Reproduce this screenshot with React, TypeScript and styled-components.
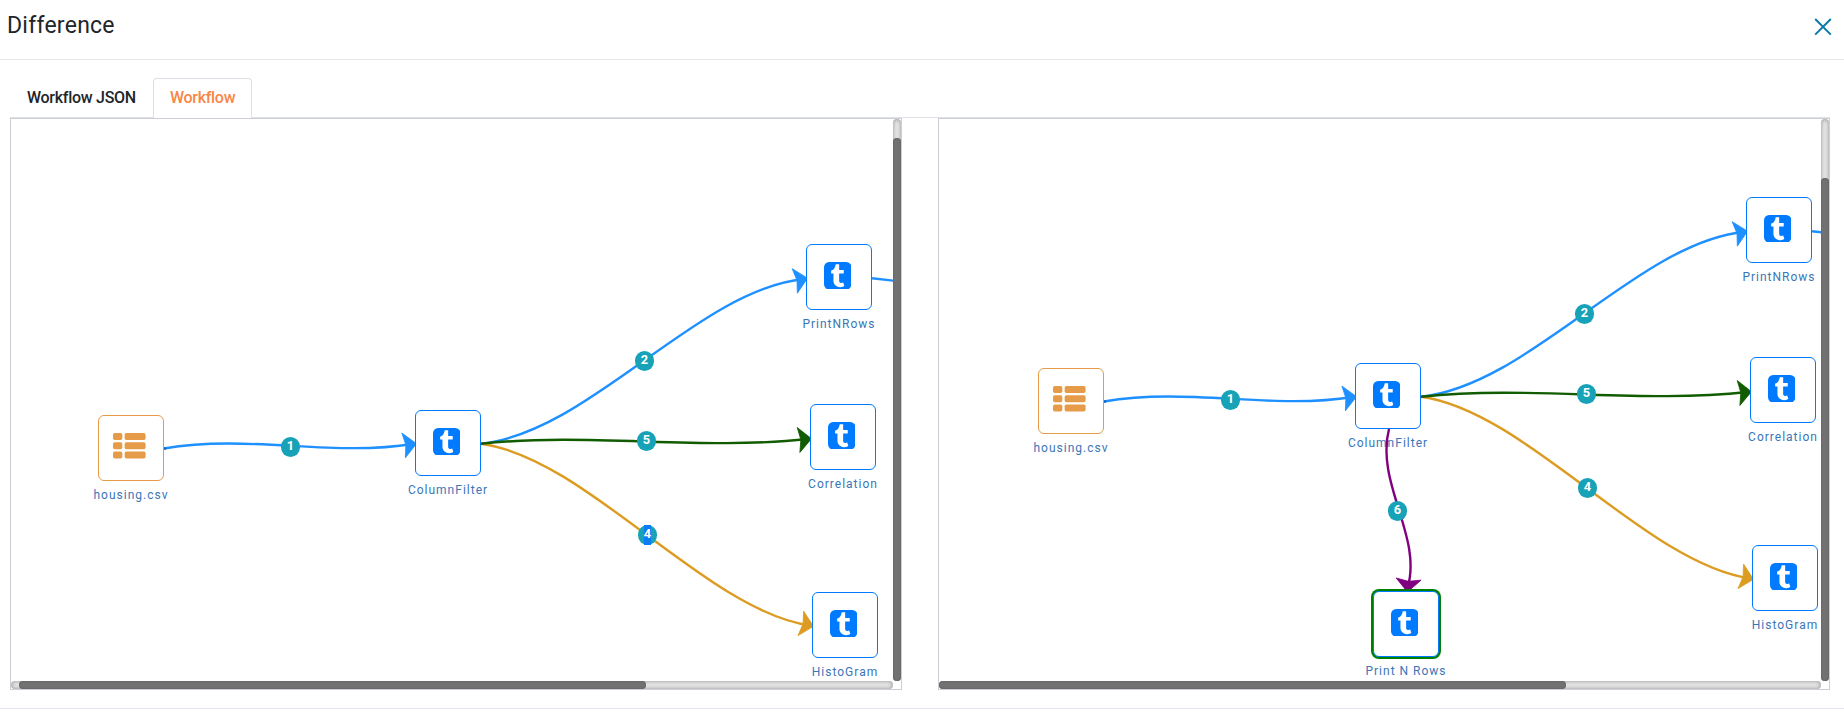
import React from 'react';
import styled, { createGlobalStyle } from 'styled-components';

const GlobalStyle = createGlobalStyle`
  * { box-sizing: border-box; }
  body {
    margin: 0;
    background: #fff;
    color: #212529;
    font-family: Roboto, 'Liberation Sans', sans-serif;
    overflow: hidden;
  }
`;

const Dialog = styled.div`
  display: flex;
  flex-direction: column;
  height: 722px;
`;

const Header = styled.header`
  display: flex;
  justify-content: space-between;
  align-items: flex-start;
  height: 60px;
  padding: 9px 12px 0 7px;
  border-bottom: 1px solid #e5e7ea;
`;

const Title = styled.h1`
  margin: 1px 0 0;
  font-size: 23px;
  line-height: 32px;
  font-weight: 400;
  letter-spacing: 0.25px;
`;

const CloseButton = styled.button`
  display: flex;
  margin: 9px 0 0;
  padding: 0;
  border: 0;
  background: none;
  color: #0a7ba8;
`;

const Body = styled.main`
  padding: 18px 14px 0 10px;
  height: 649px;
  border-bottom: 1px solid #e2e6ec;
`;

const Tabs = styled.nav`
  display: flex;
  height: 40px;
  border-bottom: 1px solid #dee2e6;
`;

const Tab = styled.button<{ $active?: boolean }>`
  height: 40px;
  padding: 0 16px 1px;
  border: 1px solid ${(p) => (p.$active ? '#dcdfe6' : 'transparent')};
  border-bottom: 0;
  border-radius: 4px 4px 0 0;
  background: ${(p) => (p.$active ? '#fff' : 'transparent')};
  color: ${(p) => (p.$active ? '#f98646' : '#212529')};
  font: 500 16px/24px Roboto, sans-serif;
  letter-spacing: -0.28px;
`;

const Panels = styled.div`
  display: flex;
  justify-content: space-between;
`;

const Panel = styled.section`
  display: grid;
  grid-template: 562px 8px / 882px 8px;
  border: 1px solid #cccfd6;
`;

const Track = styled.div<{ $vertical?: boolean; $lead: number }>`
  display: flex;
  flex-direction: ${(p) => (p.$vertical ? 'column' : 'row')};
  padding: ${(p) => (p.$vertical ? `${p.$lead}px 0 0` : `0 0 0 ${p.$lead}px`)};
  border-radius: 4px;
  background: #e6e6e6;
  box-shadow: inset 0 0 4px #8f8f8f;
`;

const Thumb = styled.div<{ $length: number }>`
  flex: 0 0 ${(p) => p.$length}px;
  border-radius: 4px;
  background: #727272;
  box-shadow: inset 0 0 2px #555;
`;

const Canvas = styled.div`
  position: relative;
  overflow: hidden;
`;

const Scene = styled.div<{ $x: number; $y: number }>`
  position: absolute;
  left: ${(p) => p.$x}px;
  top: ${(p) => p.$y}px;
`;

const Wires = styled.svg`
  position: absolute;
  left: 0;
  top: 0;
  overflow: visible;
`;

const NodeBox = styled.div<{ $x: number; $y: number; $color: string; $added?: boolean }>`
  position: absolute;
  left: ${(p) => p.$x}px;
  top: ${(p) => p.$y}px;
  width: 66px;
  height: 66px;
  display: flex;
  justify-content: center;
  padding: 17px 3px 0 0;
  border: 1px solid ${(p) => p.$color};
  border-radius: 6px;
  background: #fff;
  color: ${(p) => p.$color};
  box-shadow: ${(p) => (p.$added ? '0 0 0 2px #008000' : 'none')};
`;

const NodeLabel = styled.div<{ $x: number; $y: number }>`
  position: absolute;
  left: ${(p) => p.$x - 28}px;
  top: ${(p) => p.$y + 71}px;
  width: 122px;
  text-align: center;
  font-size: 12px;
  line-height: 18px;
  letter-spacing: 1px;
  white-space: nowrap;
  color: #3a76b8;
`;

const Badge = styled.div<{ $x: number; $y: number }>`
  position: absolute;
  left: ${(p) => p.$x - 9.5}px;
  top: ${(p) => p.$y - 10}px;
  display: flex;
  justify-content: center;
  width: 19px;
  height: 20px;
  border-radius: 10px;
  background: #17a2b8;
  color: #fff;
  font-size: 12.8px;
  line-height: 18px;
  font-weight: 700;
`;

const BadgeText = styled.span<{ $selected?: boolean }>`
  height: 20px;
  background: ${(p) => (p.$selected ? '#0a7cf5' : 'transparent')};
`;

const TumblrIcon = () => (
  <svg width="27.43" height="27.43" viewBox="128 128 1536 1536" fill="currentColor">
    <path d="M1264 1461l-62-183q-44 22-103 22-36-1-62-10.5t-38.5-31.5-17.5-40.5-5-43.5v-398h257v-194h-256v-326h-188q-8 0-9 10-5 44-17.5 87t-39 95-77 95-118.5 68v165h130v418q0 57 21.5 115t65 111 121 85.5 176.5 30.5q69-1 136.5-25t85.5-50zm400-1045v960q0 119-84.5 203.5t-203.5 84.5h-960q-119 0-203.5-84.5t-84.5-203.5v-960q0-119 84.5-203.5t203.5-84.5h960q119 0 203.5 84.5t84.5 203.5z" />
  </svg>
);

const ListIcon = () => (
  <svg width="32.6" height="25.6" viewBox="0 0 1792 1408" fill="currentColor">
    {[0, 512, 1024].map((y) => (
      <g key={y}>
        <rect x="0" y={y} width="512" height="384" rx="96" />
        <rect x="640" y={y} width="1152" height="384" rx="96" />
      </g>
    ))}
  </svg>
);

type NodeData = { label: string; x: number; y: number; kind?: 'data'; added?: boolean };
type EdgeData = {
  id?: number;
  path: string;
  color: string;
  tip?: [number, number, number];
  badge?: [number, number];
};

const BLUE = '#1e90ff';
const GREEN = '#125c00';
const GOLD = '#dc9c22';
const PURPLE = '#800080';

const baseNodes: NodeData[] = [
  { label: 'housing.csv', x: 87, y: 296, kind: 'data' },
  { label: 'ColumnFilter', x: 404, y: 291 },
  { label: 'PrintNRows', x: 795, y: 125 },
  { label: 'Correlation', x: 799, y: 285 },
  { label: 'HistoGram', x: 801, y: 473 },
];

const baseEdges: EdgeData[] = [
  { id: 1, path: 'M153 329.5C237 315 320 338 402 325', color: BLUE, tip: [405, 324.7, -8], badge: [279.5, 327.5] },
  { id: 2, path: 'M470 324.7C578 313.7 687 170.5 793 160', color: BLUE, tip: [796, 159.3, -12], badge: [633.5, 242] },
  { path: 'M861 159.2L890 162.5', color: BLUE },
  { id: 4, path: 'M470 324.7C575 338.7 694 491 799 506.5', color: GOLD, tip: [802, 507.2, 13], badge: [636.5, 416] },
  { id: 5, path: 'M470 324.7C580 313 689 332 797 320', color: GREEN, tip: [800, 319.7, -6], badge: [635.5, 322] },
];

const addedNode: NodeData = { label: 'Print N Rows', x: 422, y: 519, added: true };
const addedEdge: EdgeData = {
  id: 6,
  path: 'M438 357C424 411 472 465 456.5 516',
  color: PURPLE,
  tip: [456.5, 519.5, 95],
  badge: [446.5, 438.5],
};

type GraphProps = { x: number; y: number; nodes: NodeData[]; edges: EdgeData[]; selected?: number };

const Graph = ({ x, y, nodes, edges, selected }: GraphProps) => (
  <Canvas>
    <Scene $x={x} $y={y}>
      {nodes.map((n) => (
        <NodeLabel key={n.label} $x={n.x} $y={n.y}>
          {n.label}
        </NodeLabel>
      ))}
      <Wires width="900" height="600">
        {edges.map((e, i) => (
          <g key={i}>
            <path d={e.path} fill="none" stroke={e.color} strokeWidth="2.4" />
            {e.tip && (
              <path
                d="M0.5 0L-12.5 -12.5L-10.2 0L-12.5 12.5Z"
                fill={e.color}
                stroke={e.color}
                strokeWidth="0.8"
                transform={`translate(${e.tip[0]} ${e.tip[1]}) rotate(${e.tip[2]})`}
              />
            )}
          </g>
        ))}
        <circle cx="154" cy="329.5" r="1.2" fill="#0b62b5" />
      </Wires>
      {nodes.map((n) => (
        <NodeBox key={n.label} $x={n.x} $y={n.y} $color={n.kind ? '#e59b48' : '#007bff'} $added={n.added}>
          {n.kind ? <ListIcon /> : <TumblrIcon />}
        </NodeBox>
      ))}
      {edges.map(
        (e) =>
          e.badge && (
            <Badge key={e.id} $x={e.badge[0]} $y={e.badge[1]}>
              <BadgeText $selected={e.id === selected}>{e.id}</BadgeText>
            </Badge>
          ),
      )}
    </Scene>
  </Canvas>
);

export default function App() {
  return (
    <>
      <GlobalStyle />
      <Dialog>
        <Header>
          <Title>Difference</Title>
          <CloseButton aria-label="Close">
            <svg width="18" height="18" viewBox="0 0 18 18" stroke="currentColor" strokeWidth="2">
              <path d="M1.2 1L16.8 16.6M16.8 1L1.2 16.6" />
            </svg>
          </CloseButton>
        </Header>
        <Body>
          <Tabs>
            <Tab>Workflow JSON</Tab>
            <Tab $active>Workflow</Tab>
          </Tabs>
          <Panels>
            <Panel>
              <Graph x={0} y={0} nodes={baseNodes} edges={baseEdges} selected={4} />
              <Track $vertical $lead={19}>
                <Thumb $length={543} />
              </Track>
              <Track $lead={8}>
                <Thumb $length={627} />
              </Track>
            </Panel>
            <Panel>
              <Graph x={12} y={-47} nodes={[...baseNodes, addedNode]} edges={[...baseEdges, addedEdge]} />
              <Track $vertical $lead={59}>
                <Thumb $length={503} />
              </Track>
              <Track $lead={0}>
                <Thumb $length={627} />
              </Track>
            </Panel>
          </Panels>
        </Body>
      </Dialog>
    </>
  );
}
